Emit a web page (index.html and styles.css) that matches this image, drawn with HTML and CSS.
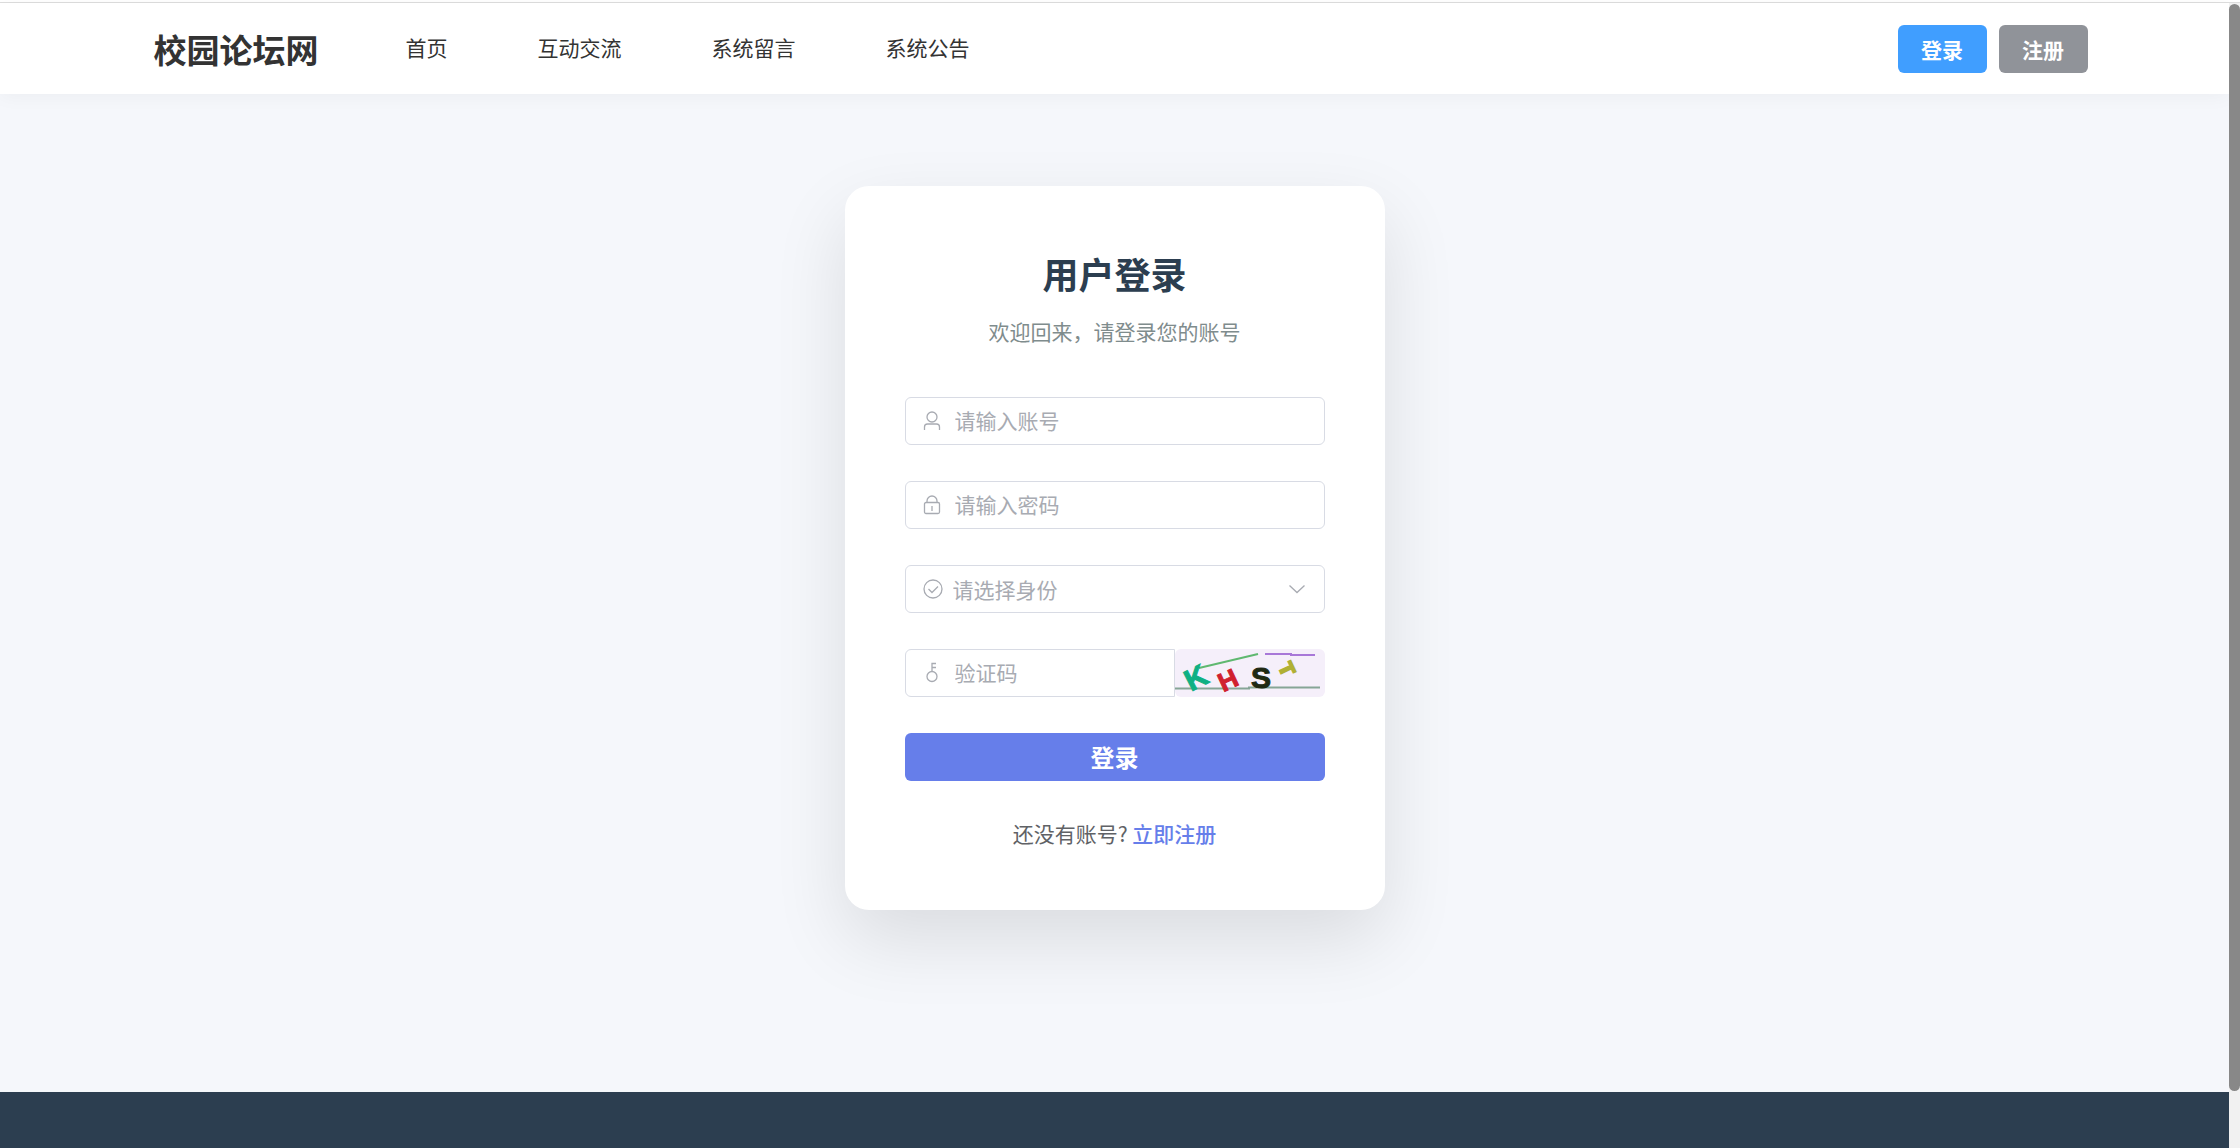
FILE: index.html
```html
<!DOCTYPE html>
<html lang="zh-CN">

<head>
    <meta charset="utf-8">
    <title>校园论坛网</title>
    <link rel="stylesheet" href="styles.css">
</head>

<body>
    <div class="shell">
        <div class="page">
            <header class="header">
                <div class="header-inner">
                    <h1 class="logo">校园论坛网</h1>
                    <nav class="menu">
                        <a href="#">首页</a>
                        <a href="#">互动交流</a>
                        <a href="#">系统留言</a>
                        <a href="#">系统公告</a>
                    </nav>
                    <div class="actions">
                        <button type="button" class="btn btn-primary">登录</button>
                        <button type="button" class="btn btn-info">注册</button>
                    </div>
                </div>
            </header>

            <main class="main">
                <form class="card">
                    <h2>用户登录</h2>
                    <p class="subtitle">欢迎回来，请登录您的账号</p>

                    <label class="field">
                        <svg class="icon" viewBox="0 0 22 22">
                            <circle cx="11" cy="7" r="5" />
                            <path d="M3.500 20v-3a3 3 0 0 1 3-3h9a3 3 0 0 1 3 3v3" />
                        </svg>
                        <input type="text" placeholder="请输入账号" aria-label="账号">
                    </label>

                    <label class="field">
                        <svg class="icon" viewBox="0 0 22 22">
                            <rect x="3.500" y="8.500" width="15" height="11" rx="1.500" />
                            <path d="M6 8.500v-1.500a5 5 0 0 1 10 0v1.500M11 12v5" />
                        </svg>
                        <input type="password" placeholder="请输入密码" aria-label="密码">
                    </label>

                    <label class="field field-select">
                        <svg class="icon" viewBox="0 0 22 22">
                            <circle cx="11" cy="11" r="9" />
                            <path d="M6.500 11l3.500 3.500l6-6" />
                        </svg>
                        <select aria-label="身份">
                            <option>请选择身份</option>
                            <option>用户</option>
                            <option>管理员</option>
                        </select>
                        <svg class="icon" viewBox="0 0 22 22">
                            <path d="M3.500 7.500l7.500 7l7.500-7" />
                        </svg>
                    </label>

                    <div class="code-row">
                        <label class="field field-code">
                            <svg class="icon" viewBox="0 0 22 22">
                                <circle cx="11" cy="14.500" r="5" />
                                <path d="M11 9.500v-8h4M11 5.500h4" />
                            </svg>
                            <input type="text" placeholder="验证码" aria-label="验证码">
                        </label>
                        <svg class="captcha" viewBox="0 0 150 48">
                            <path d="M24 19L83 5" stroke="#5fb870" />
                            <path d="M90 5h26v1h24" stroke="#a878d8" />
                            <path d="M0 39.500h74v-1h71" stroke="#86a596" />
                            <text transform="translate(21 29) rotate(-27)" y="10" fill="#0fb083" stroke="#0fb083">K</text>
                            <text class="small" transform="translate(53 31) rotate(-25)" y="9" fill="#d0202e" stroke="#d0202e">H</text>
                            <text transform="translate(86 29)" y="10" fill="#1f2913" stroke="#1f2913">S</text>
                            <text class="tiny" transform="translate(112 20) rotate(65)" y="7" fill="#b0b035" stroke="#b0b035">T</text>
                        </svg>
                    </div>

                    <button type="button" class="submit">登录</button>

                    <p class="register">还没有账号? <a href="#">立即注册</a></p>
                </form>
            </main>

            <footer class="footer"></footer>
        </div>
        <div class="scrollbar">
            <div class="thumb"></div>
        </div>
    </div>
</body>

</html>
```
FILE: styles.css
```css
* {
    box-sizing: border-box;
}

body {
    margin: 0;
    padding-top: 2px;
    font-family: "Noto Sans CJK SC", sans-serif;
    font-size: 21px;
    color: #606266;
    background-color: #fff;
}

h1,
h2,
p {
    margin: 0;
}

a {
    text-decoration: none;
}

button,
input,
select {
    font-family: inherit;
    font-size: 21px;
    border: none;
}

.shell {
    display: flex;
    min-height: calc(100vh - 2px);
    border-top: 1px solid #ddd;
}

.page {
    flex: 1;
    display: flex;
    flex-direction: column;
    background-color: #f5f7fb;
}

/* header */
.header {
    height: 91px;
    background-color: #fff;
    box-shadow: 0 3px 18px rgba(0, 0, 0, .04);
}

.header-inner {
    display: flex;
    align-items: center;
    max-width: 1950px;
    height: 100%;
    margin: 0 auto;
    padding: 0 2px 0 14px;
}

.logo {
    font-size: 33px;
    line-height: 48px;
    color: #333;
}

.menu {
    display: flex;
    gap: 90px;
    margin-left: 87px;
    padding-bottom: 3px;
}

.menu a {
    color: #333;
}

.actions {
    display: flex;
    gap: 12px;
    margin-left: auto;
}

.btn {
    width: 89px;
    height: 48px;
    padding: 0;
    border-radius: 6px;
    font-weight: bold;
    color: #fff;
}

.btn-primary {
    background-color: #409eff;
}

.btn-info {
    background-color: #909399;
}

/* login card */
.main {
    padding: 92px 0 182px;
}

.card {
    width: 540px;
    margin: 0 auto;
    padding: 60px;
    border-radius: 24px;
    background-color: #fff;
    box-shadow: 0 30px 75px rgba(0, 0, 0, .11);
}

.card h2 {
    font-size: 36px;
    line-height: 54px;
    text-align: center;
    color: #2c3e50;
}

.subtitle {
    margin: 15px 0 49px;
    line-height: 33px;
    text-align: center;
    color: #7f8c8d;
}

.field {
    display: flex;
    align-items: center;
    height: 48px;
    margin-bottom: 36px;
    padding: 0 15px;
    border: 1px solid #d8dbe4;
    border-radius: 6px;
}

.field-select {
    padding: 0 16px;
}

.icon {
    flex: none;
    width: 22px;
    height: 22px;
    fill: none;
    stroke: #a8abb2;
    stroke-width: 1.3;
}

.field input,
.field select {
    flex: 1;
    min-width: 0;
    height: 46px;
    margin-left: 12px;
    padding: 0 0 2px;
    outline: none;
    background: none;
    color: #a8abb2;
}

.field select {
    appearance: none;
    margin-left: 9px;
    padding: 0;
}

.field input::placeholder {
    color: #a8abb2;
}

.code-row {
    display: flex;
    margin-bottom: 36px;
}

.field-code {
    flex: 1;
    min-width: 0;
    margin-bottom: 0;
    border-radius: 6px 0 0 6px;
}

.captcha {
    flex: none;
    width: 150px;
    height: 48px;
    border-radius: 6px;
    background-color: #f5effa;
    fill: none;
    stroke-width: 2;
    font-family: "Liberation Sans", sans-serif;
    font-size: 30px;
    font-weight: bold;
    text-anchor: middle;
}

.captcha text {
    stroke-width: 1;
}

.captcha .small {
    font-size: 26px;
}

.captcha .tiny {
    font-size: 20px;
    stroke-width: 2;
}

.submit {
    display: block;
    width: 100%;
    height: 48px;
    padding: 0 0 2px;
    border-radius: 6px;
    font-size: 24px;
    font-weight: bold;
    color: #fff;
    background-color: #667eea;
}

.register {
    margin-top: 36px;
    line-height: 33px;
    text-align: center;
}

.register a {
    font-weight: 500;
    color: #667eea;
}

.footer {
    flex: 1;
    min-height: 56px;
    background-color: #2c3e50;
}

.scrollbar {
    width: 11px;
    padding: 1px 0 57px;
    background-color: #f1f1f1;
}

.thumb {
    height: 100%;
    border-radius: 6px;
    background-color: #888;
}
```
